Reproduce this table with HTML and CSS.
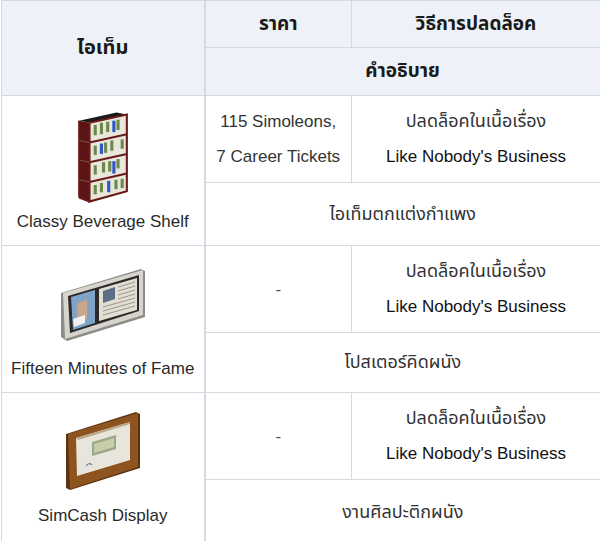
FILE: index.html
```html
<!DOCTYPE html>
<html lang="th">
<head>
<meta charset="utf-8">
<link rel="stylesheet" href="styles.css">
</head>
<body>
<table class="items">
  <colgroup><col class="c1"><col class="c2"><col class="c3"></colgroup>
  <thead>
    <tr class="h1">
      <th rowspan="2" class="big">ไอเท็ม</th>
      <th>ราคา</th>
      <th>วิธีการปลดล็อค</th>
    </tr>
    <tr class="h2">
      <th colspan="2">คำอธิบาย</th>
    </tr>
  </thead>
  <tbody>
    <tr class="r-top">
      <td rowspan="2" class="item">
        <div class="pic pic-shelf">
          <svg width="56" height="96" viewBox="0 2 54 90">
            <polygon points="4,12 40,4 50,6 14,14" fill="#1a1a1a"/>
            <polygon points="4,12 14,14 14,90 4,86" fill="#5a1414"/>
            <polygon points="14,14 50,6 50,80 14,90" fill="#e9e6dc"/>
            <g fill="#6b8a4a">
              <rect x="18" y="16" width="3" height="10"/><rect x="24" y="14" width="3" height="11"/><rect x="30" y="13" width="3" height="10"/><rect x="40" y="11" width="3" height="10"/>
              <rect x="18" y="36" width="3" height="9"/><rect x="28" y="33" width="3" height="10"/><rect x="34" y="31" width="3" height="10"/><rect x="44" y="30" width="3" height="9"/>
              <rect x="18" y="55" width="3" height="9"/><rect x="26" y="52" width="3" height="10"/><rect x="32" y="51" width="3" height="10"/><rect x="40" y="49" width="3" height="9"/>
              <rect x="18" y="74" width="3" height="9"/><rect x="24" y="72" width="3" height="9"/><rect x="38" y="69" width="3" height="9"/><rect x="44" y="68" width="3" height="9"/>
            </g>
            <g fill="#2e56c8">
              <rect x="36" y="12" width="3" height="11"/><rect x="24" y="34" width="3" height="10"/><rect x="36" y="51" width="3" height="12"/><rect x="31" y="70" width="3" height="11"/>
            </g>
            <g stroke="#6a1a18" stroke-width="2" fill="none">
              <polyline points="14,14 50,6 50,80 14,90 14,14"/>
              <line x1="14" y1="33" x2="50" y2="25"/>
              <line x1="14" y1="52" x2="50" y2="44"/>
              <line x1="14" y1="71" x2="50" y2="63"/>
              <line x1="4" y1="12" x2="4" y2="86"/>
              <line x1="4" y1="86" x2="14" y2="90"/>
            </g>
            <g stroke="#8a7a5a" stroke-width="1" opacity="0.6">
              <line x1="4" y1="31" x2="14" y2="33"/><line x1="4" y1="50" x2="14" y2="52"/><line x1="4" y1="69" x2="14" y2="71"/>
            </g>
          </svg>
        </div>
        <div class="name">Classy Beverage Shelf</div>
      </td>
      <td class="two">115 Simoleons,<br>7 Career Tickets</td>
      <td class="two"><span class="th">ปลดล็อคในเนื้อเรื่อง</span><br><span class="story">Like Nobody's Business</span></td>
    </tr>
    <tr class="r-desc">
      <td colspan="2" class="desc"><span class="th">ไอเท็มตกแต่งกำแพง</span></td>
    </tr>

    <tr class="r-top">
      <td rowspan="2" class="item">
        <div class="pic pic-poster">
          <svg width="88" height="76" viewBox="0 0 88 76">
            <polygon points="2,26 82,2 86,4 86,50 8,74 2,70" fill="#8c8c86"/>
            <polygon points="4,26 84,3 84,48 6,72" fill="#d6d4cc"/>
            <polygon points="9,29 80,8 80,44 11,66" fill="#2a2a2a"/>
            <polygon points="12,30 36,23 36,56 14,63" fill="#7fa4c8"/>
            <polygon points="18,36 28,33 28,52 19,55" fill="#c9a58a"/>
            <polygon points="14,52 26,48 26,56 15,60" fill="#f2f2f2"/>
            <polygon points="40,22 78,11 78,43 40,54" fill="#e2ded4"/>
            <polygon points="44,24 56,20 56,32 44,36" fill="#5a6e88"/>
            <g stroke="#9a968c" stroke-width="1">
              <line x1="59" y1="20" x2="76" y2="15"/><line x1="59" y1="24" x2="76" y2="19"/><line x1="59" y1="28" x2="76" y2="23"/><line x1="59" y1="32" x2="76" y2="27"/>
              <line x1="44" y1="40" x2="76" y2="31"/><line x1="44" y1="44" x2="76" y2="35"/><line x1="44" y1="48" x2="76" y2="39"/>
            </g>
          </svg>
        </div>
        <div class="name">Fifteen Minutes of Fame</div>
      </td>
      <td class="two dash">-</td>
      <td class="two"><span class="th">ปลดล็อคในเนื้อเรื่อง</span><br><span class="story">Like Nobody's Business</span></td>
    </tr>
    <tr class="r-desc2">
      <td colspan="2" class="desc"><span class="th">โปสเตอร์คิดผนัง</span></td>
    </tr>

    <tr class="r-top">
      <td rowspan="2" class="item item-last">
        <div class="pic pic-frame">
          <svg width="78" height="82" viewBox="0 0 78 82">
            <polygon points="2,24 72,2 76,4 76,58 6,80 2,78" fill="#5c3210"/>
            <polygon points="4,24 74,3 74,57 6,79" fill="#8e5420"/>
            <polygon points="12,28 66,12 66,50 13,66" fill="#e8e6dc"/>
            <polygon points="12,28 66,12 66,14 14,30" fill="#b8a88a"/>
            <polygon points="28,32 52,25 52,39 28,46" fill="#9aa88a"/>
            <polygon points="30,34 50,28 50,37 30,43" fill="#c8cca8"/>
            <path d="M22,56 q3,-4 6,-1" stroke="#6a7a9a" stroke-width="1.2" fill="none"/>
          </svg>
        </div>
        <div class="name">SimCash Display</div>
      </td>
      <td class="two dash">-</td>
      <td class="two"><span class="th">ปลดล็อคในเนื้อเรื่อง</span><br><span class="story">Like Nobody's Business</span></td>
    </tr>
    <tr class="r-desc3">
      <td colspan="2" class="desc"><span class="th">งานศิลปะติกผนัง</span></td>
    </tr>
  </tbody>
</table>
</body>
</html>
```

FILE: styles.css
```css
html, body {
  margin: 0;
  padding: 0;
  background: #ffffff;
}
body {
  font-family: "Liberation Sans", "Noto Sans Thai", "DejaVu Sans", sans-serif;
  color: #333333;
}
.items {
  width: 599px;
  border-collapse: collapse;
  table-layout: fixed;
  margin-left: 1px;
}
.c1 { width: 203px; }
.c2 { width: 147px; }
.c3 { width: 249px; }
.items th,
.items td {
  border: 1px solid #d4dae4;
  text-align: center;
  vertical-align: middle;
  padding: 0;
}
.items th {
  background: #eef2f8;
  color: #1a1a1a;
  font-weight: bold;
  font-size: 19px;
}
.items th.big { font-size: 20px; }
.items th:first-child { border-right: 2px solid #d4dae4; }
.h1 { height: 47px; }
.h2 { height: 48px; }
.item {
  border-right: 2px solid #d4dae4 !important;
  vertical-align: bottom !important;
}
.r-top { height: 87px; }
.r-desc { height: 63px; }
.r-desc2 { height: 60px; }
.r-desc3 { height: 66px; }
.pic {
  display: flex;
  justify-content: center;
  align-items: center;
}
.pic svg { display: block; }
.pic-shelf { height: 96px; }
.pic-poster { height: 80px; margin-bottom: 7px; }
.pic-frame { height: 84px; }
.name {
  font-size: 17px;
  color: #2a2a2a;
  padding: 8px 0 14px;
  line-height: 18px;
}
.item-last .name { padding: 14px 0 20px; }
.th { font-size: 18px; }
.two {
  font-size: 17px;
  line-height: 35px;
  color: #333333;
}
.story { color: #111111; }
.dash { color: #555555; }
.desc {
  font-size: 17px;
  color: #333333;
}
```
